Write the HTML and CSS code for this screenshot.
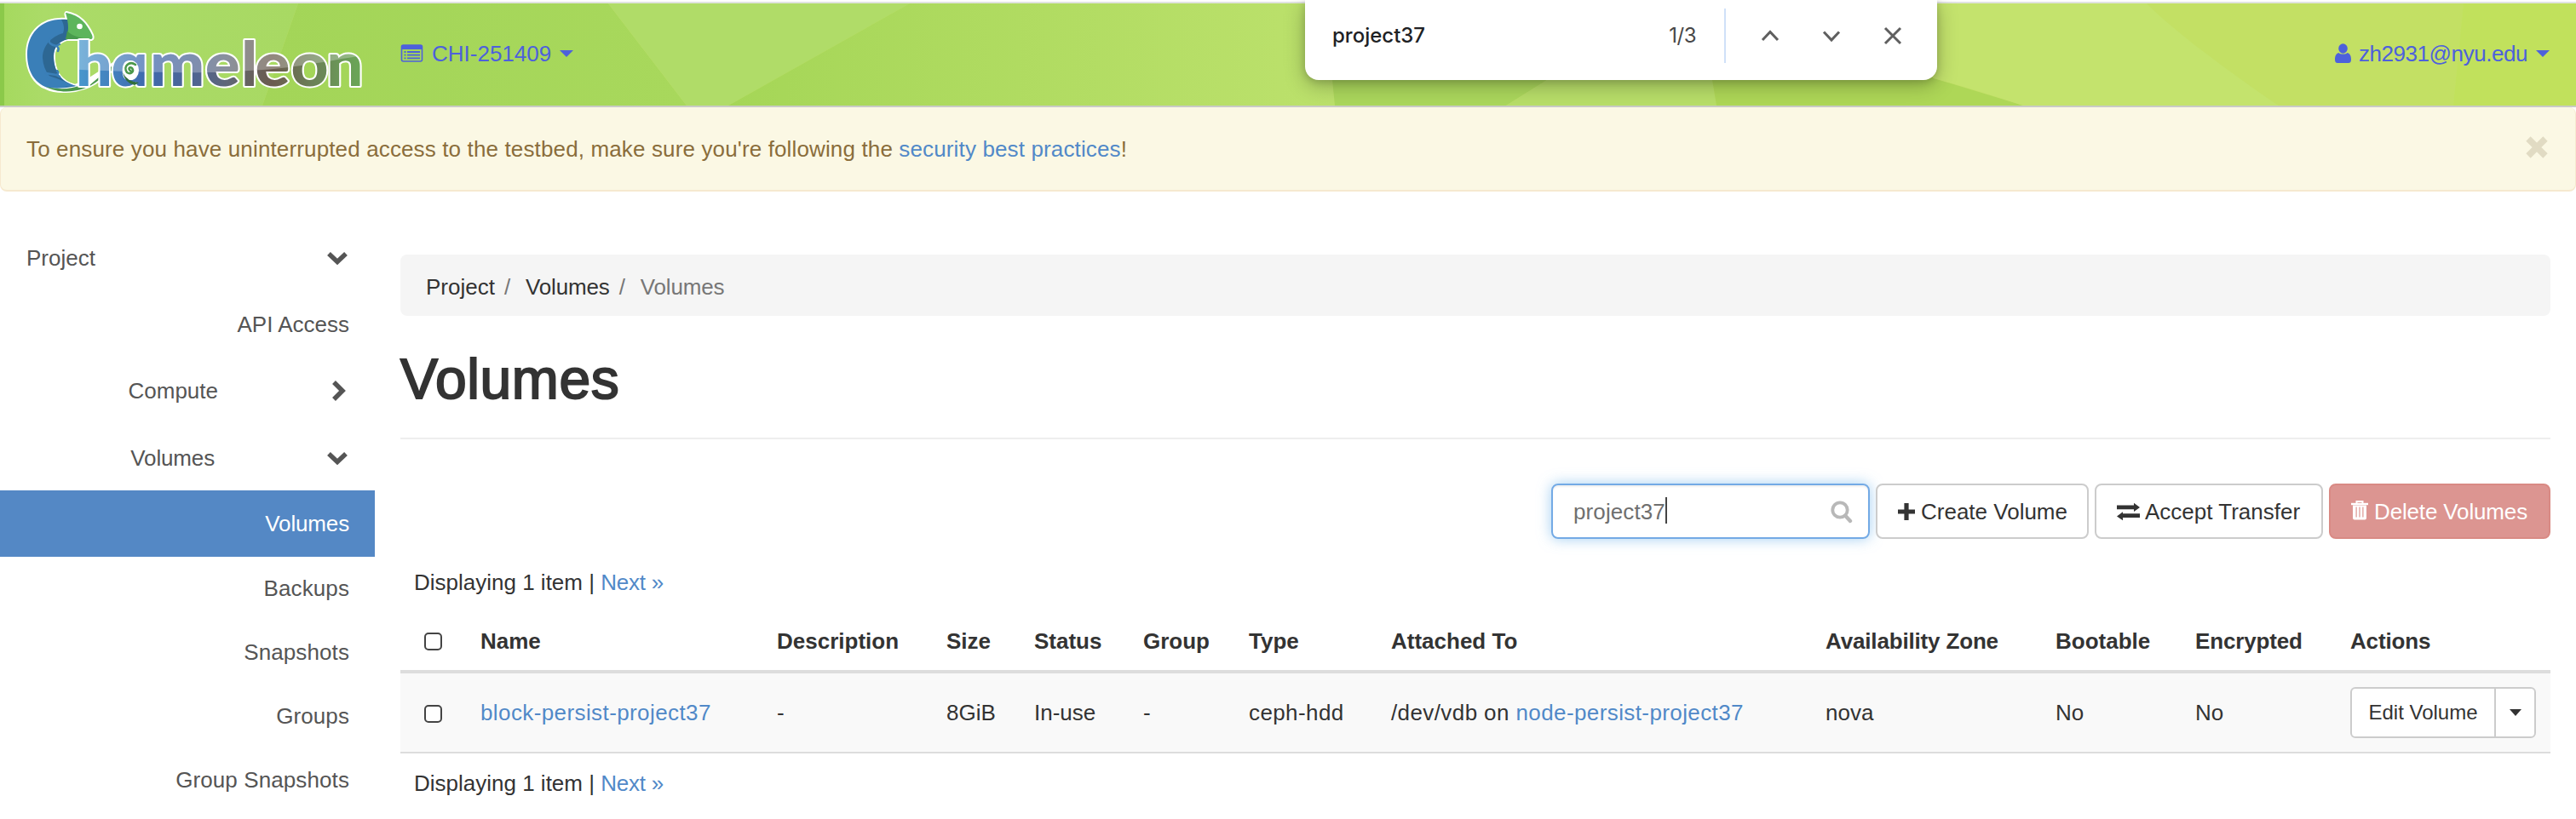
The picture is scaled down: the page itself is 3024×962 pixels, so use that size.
FILE: index.html
```html
<!DOCTYPE html>
<html lang="en">
<head>
<meta charset="utf-8">
<title>Volumes - Chameleon</title>
<link rel="stylesheet" href="styles.css">
</head>
<body>
<header class="navbar">
  <svg class="navbar-bg" viewBox="0 4 3024 120" preserveAspectRatio="none" aria-hidden="true">
    <defs>
      <linearGradient id="g1"><stop offset="0" stop-color="#a3d558"/><stop offset="1" stop-color="#a8d85c"/></linearGradient>
      <linearGradient id="g2"><stop offset="0" stop-color="#a5d657"/><stop offset="1" stop-color="#bce16c"/></linearGradient>
      <linearGradient id="g3"><stop offset="0" stop-color="#a5d95e"/><stop offset=".15" stop-color="#abdb68"/><stop offset="1" stop-color="#a8d963"/></linearGradient>
    </defs>
    <rect x="0" y="4" width="3024" height="120" fill="#c3e069"/>
    <path fill="url(#g3)" d="M0 4H350L308 124H0z"/>
    <path fill="url(#g1)" d="M350 4H714L806 124H308z"/>
    <path fill="#b0dc68" d="M714 4H1068L855 124H806z"/>
    <path fill="url(#g2)" d="M1068 4H1555L1567 124H855z"/>
    <path fill="#abd75c" d="M1555 4H1960L1768 124H1567z"/>
    <path fill="#b8de69" d="M1960 4H1995L2015 124H1768z"/>
    <path fill="#aed757" d="M1995 4H2180L2270 92Q2310 104 2375 124H2015z"/>
    <path fill="#c4e36d" d="M2180 4H2520C2545 30 2610 80 2675 124H2375Q2310 102 2270 92z"/>
    <path fill="#c3e064" d="M2520 4H2892L2880 124H2675C2610 80 2545 30 2520 4z"/>
    <path fill="#c1e15c" d="M2892 4H3024V124H2880z"/>
    <rect x="0" y="4" width="5" height="120" fill="#8bc94a"/>
  </svg>
  <a class="brand" href="#">
    <svg class="logo" viewBox="28 10 402 104" role="img">
      <defs>
        <linearGradient id="hue" gradientUnits="userSpaceOnUse" x1="88" y1="0" x2="402" y2="0">
          <stop offset="0" stop-color="#4796cc"/><stop offset=".24" stop-color="#3f68ad"/><stop offset=".42" stop-color="#50648f"/>
          <stop offset=".52" stop-color="#5f6778"/><stop offset=".6" stop-color="#66625f"/><stop offset=".68" stop-color="#6b5b4f"/>
          <stop offset=".82" stop-color="#6b8057"/><stop offset="1" stop-color="#6aa857"/>
        </linearGradient>
        <pattern id="letters" patternUnits="userSpaceOnUse" x="0" y="0" width="440" height="120">
          <rect width="440" height="120" fill="url(#hue)"/>
          <path fill="#fff" fill-opacity=".27" d="M0 0H440V60C380 66 340 80 275 83C225 87 150 86 0 77z"/>
        </pattern>
      </defs>
      <path fill="#fff" stroke="#fff" stroke-width="4" stroke-linejoin="round" d="M79 23C50 20 32 38 32 64C32 84 41 98 54 103C68 110 94 108 112 97L140 76L138 72L104 94L88 101C70 96 63 82 63 66C63 56 68 49 78 46H106C109 46 109 44 108 41C102 28 94 18 78 15C76 17 79 20 79 23z"/>
      <path class="hollow" d="M80 50C70 51 65 58 65 66C65 82 73 95 88 98L91 97V50z"/>
      <path fill="#3a7fb8" d="M79 23C50 20 32 38 32 64C32 84 41 98 56 103Q72 105 90 101C70 96 63 82 63 66C63 56 68 49 78 46z"/>
      <path fill="#2d6793" d="M72 23H80V46C68 49 63 56 63 66C63 82 70 96 88 101L78 102C60 96 51 84 50 68C50 54 60 43 74 39C76 34 75 28 72 23z"/>
      <path fill="#3a7fb8" d="M54 88Q68 92 88 101L72 102Q58 98 54 88z"/>
      <path fill="none" stroke="#3a7fb8" stroke-width="2.5" stroke-linecap="round" d="M58 46Q56 52 66 54Q70 56 68 60M66 54L70 52M54 86L66 88Q70 86 67 83M66 88L70 90"/>
      <path fill="#5db55c" d="M78 15C94 18 102 28 108 41C109 44 109 46 106 46H77C81 38 81 28 77 15z"/>
      <path fill="#479a4c" d="M79 36Q85 44 106 46H77z"/>
      <circle cx="93.500" cy="31" r="3.300" fill="#fff"/>
      <path fill="#4b984b" d="M54 102C72 106 84 104 92 101H104L138 72V78L112 97C94 110 68 110 54 102z"/>
      <text class="logo-text" transform="scale(1.06 1)" x="83.800 123.100 166 227.100 267 282.500 322.200 361.600" y="101">hɑmeleon</text>
      <ellipse cx="153.500" cy="82.500" rx="9.500" ry="11.500" fill="#fff"/>
      <path fill="none" stroke="#4b984b" stroke-width="2.600" stroke-linecap="round" d="M153 83C150 81 152 78 155 80C158 84 153 88 149 85C144 78 152 71 159 76"/>
      <path fill="#2f6e3c" d="M144 85Q149 96 163 97L158 100Q147 98 144 85z"/>
    </svg>
  </a>
  <a class="nav-link project" href="#">
    <svg class="icon-list" viewBox="0 0 26 21" fill="none" stroke="#4d61dc"><rect x="1" y="1" width="24" height="19" rx="2" stroke-width="1.6"/><path stroke="none" fill="#4d61dc" d="M1 1h24v5H1z"/><path stroke-width="1.8" d="M4 9h2M7.500 9h15M4 12.700h2M7.500 12.700h15M4 16.400h2M7.500 16.400h15"/></svg>
    <span>CHI-251409</span>
    <i class="caret"></i>
  </a>
  <a class="nav-link user" href="#">
    <svg class="icon-user" viewBox="0 0 19 23" fill="#4d61dc"><ellipse cx="9.500" cy="6" rx="5.300" ry="5.800"/><path d="M4.500 11C6 13 13 13 14.500 11C18 12 19 15 19 19C19 22 17.500 23 16 23H3C1.500 23 0 22 0 19C0 15 1 12 4.500 11z"/></svg>
    <span class="user-name">zh2931@nyu.edu</span>
    <i class="caret"></i>
  </a>
</header>

<div class="alert">
  <p>To ensure you have uninterrupted access to the testbed, make sure you're following the <a href="#">security best practices</a>!</p>
  <svg class="icon-close" viewBox="0 0 26 26" stroke="#e1dbc3" stroke-width="7.500"><path d="M3 3l20 20M23 3L3 23"/></svg>
</div>

<div class="layout">
  <nav class="sidebar">
    <a class="item top" href="#"><span>Project</span><svg class="chev" viewBox="0 0 26 26"><path d="M3 8l10 9.500L23 8"/></svg></a>
    <a class="item" href="#"><span class="api">API Access</span></a>
    <a class="item compute" href="#"><span>Compute</span><svg class="chev" viewBox="0 0 26 26"><path d="M9 3l10 10-10 10"/></svg></a>
    <a class="item volumes" href="#"><span class="vol">Volumes</span><svg class="chev" viewBox="0 0 26 26"><path d="M3 8l10 9.500L23 8"/></svg></a>
    <a class="item active" href="#"><span class="vol">Volumes</span></a>
    <a class="item sub" href="#">Backups</a>
    <a class="item sub" href="#">Snapshots</a>
    <a class="item sub" href="#">Groups</a>
    <a class="item sub" href="#">Group Snapshots</a>
  </nav>

  <main class="content">
    <ol class="breadcrumb">
      <li>Project</li><li class="vol">Volumes</li><li class="vol current">Volumes</li>
    </ol>
    <h1>Volumes</h1>

    <div class="toolbar">
      <div class="search"><span>project37</span><i class="cursor"></i>
        <svg class="icon-search" viewBox="0 0 26 28" fill="none" stroke="#b8b8b8"><circle cx="11" cy="12" r="8.700" stroke-width="3.800"/><path stroke-width="4.400" stroke-linecap="round" d="M17.500 19l5.500 6"/></svg>
      </div>
      <button class="btn create"><svg viewBox="0 0 20 24"><path stroke="#333" stroke-width="5.200" d="M10 2v20M0 12h20"/></svg>Create Volume</button>
      <button class="btn accept"><svg viewBox="0 0 27 24" fill="#333"><path d="M0 4.500h20V1.800L27 7l-7 5V9.300H0zM27 14.200H7v-2L0 17.500l7 4.800v-3.200h20z"/></svg>Accept Transfer</button>
      <button class="btn delete"><svg viewBox="0 0 20 24" fill="none" stroke="#fff"><path stroke-width="2" d="M6.500 4V1.500h7V4"/><path stroke-width="2.400" d="M0 4.500h20"/><path stroke="none" fill="#fff" fill-rule="evenodd" d="M2 6h16v15q0 2-2 2H4q-2 0-2-2zM5.500 8v12h1.200V8zM9.400 8v12h1.200V8zM13.300 8v12h1.200V8z"/></svg>Delete Volumes</button>
    </div>

    <p class="count">Displaying 1 item | <a href="#">Next »</a></p>
    <table class="volumes-table">
      <colgroup><col class="c0"><col class="c1"><col class="c2"><col class="c3"><col class="c4"><col class="c5"><col class="c6"><col class="c7"><col class="c8"><col class="c9"><col class="c10"><col class="c11"></colgroup>
      <thead><tr><th><input type="checkbox"></th><th>Name</th><th>Description</th><th>Size</th><th>Status</th><th>Group</th><th>Type</th><th>Attached To</th><th class="tight">Availability Zone</th><th>Bootable</th><th class="tight">Encrypted</th><th class="tight">Actions</th></tr></thead>
      <tbody><tr><td><input type="checkbox"></td><td><a class="wide" href="#">block-persist-project37</a></td><td>-</td><td>8GiB</td><td>In-use</td><td>-</td><td class="wide">ceph-hdd</td><td class="wide">/dev/vdb on <a href="#">node-persist-project37</a></td><td>nova</td><td>No</td><td>No</td>
        <td><div class="btn-group"><button class="edit">Edit Volume</button><button class="more"><i class="caret"></i></button></div></td></tr></tbody>
    </table>
    <p class="count bottom">Displaying 1 item | <a href="#">Next »</a></p>
  </main>
</div>

<div class="find-bar">
  <span class="find-text">project37</span>
  <span class="find-count">1/3</span>
  <i class="find-divider"></i>
  <svg viewBox="0 0 24 24"><path d="M3 17l9-9.500 9 9.500"/></svg>
  <svg viewBox="0 0 24 24"><path d="M3 7.500l9 9.500 9-9.500"/></svg>
  <svg viewBox="0 0 24 24"><path d="M3 3l18 18M21 3L3 21"/></svg>
</div>
</body>
</html>
```
FILE: styles.css
```css
* { box-sizing: border-box; }
body {
  margin: 0;
  padding-top: 2px;
  height: 962px;
  overflow: hidden;
  position: relative;
  background: #fff;
  color: #333;
  font: 26px/38px "Liberation Sans", Arial, sans-serif;
}
a { color: #5189c8; text-decoration: none; }
p, h1, ol { margin: 0; padding: 0; }
button { font: inherit; color: #333; background: #fff; margin: 0; }
svg { display: block; flex: none; }
.vol { letter-spacing: -0.15px; }

/* Navbar */
.navbar {
  position: relative;
  display: flex;
  align-items: center;
  height: 124px;
  border-top: 2px solid #e1e3e0;
  border-bottom: 2px solid #c9cbc6;
  padding: 0 31px 0 28px;
}
.navbar-bg { position: absolute; inset: 0; width: 100%; height: 100%; }
.brand { position: relative; margin-right: 40px; margin-top: -4px; }
.logo { width: 402px; height: 104px; overflow: visible; }
.logo-text {
  font: 900 72px Lato, sans-serif;
  fill: url(#letters);
  stroke: #fff;
  stroke-width: 4px;
  stroke-linejoin: round;
  paint-order: stroke;
}
.hollow { fill: #abdb66; }
.nav-link { position: relative; display: flex; align-items: center; color: #4d61dc; }
.icon-list { width: 27px; height: 21px; margin-right: 10px; margin-top: -4px; }
.icon-user { width: 19px; height: 23px; margin-right: 9px; margin-top: -3px; }
.user { margin-left: auto; }
.user-name { letter-spacing: -0.44px; }
.nav-link span { line-height: 38px; padding-top: 1px; margin-top: -4px; }
.caret {
  display: block;
  border: 8px solid transparent;
  border-top-color: currentColor;
  border-bottom: 0;
}
.nav-link .caret { margin-left: 10px; margin-top: -2px; }

/* Alert */
.alert {
  display: flex;
  justify-content: space-between;
  align-items: flex-start;
  height: 99px;
  padding: 30px 32px 0 30px;
  border: 1px solid #f6e9cf;
  border-width: 0 1px 2px;
  border-radius: 8px;
  background: #fbf8e4;
  color: #8a6d3b;
  letter-spacing: 0.138px;
}
.icon-close { width: 26px; height: 26px; margin-top: 4px; }

/* Sidebar */
.layout { display: grid; grid-template-columns: 440px 1fr; gap: 30px; padding-right: 30px; }
.sidebar { padding-top: 39px; }
.item {
  display: flex;
  justify-content: flex-end;
  align-items: center;
  height: 78px;
  line-height: 78px;
  padding: 0 30px 0 31px;
  color: #555;
}
.top { justify-content: space-between; }
.compute { margin-bottom: 1px; }
.compute span { margin-right: 128px; }
.volumes { margin-bottom: -1px; }
.volumes span { margin-right: 132px; }
.active { background: #5488c5; color: #fff; }
.sub { height: 75px; line-height: 75px; letter-spacing: 0.1px; }
.chev { width: 26px; height: 26px; margin-right: 1px; margin-left: -1px; fill: none; stroke: #555; stroke-width: 5.5px; }

/* Content */
.content { padding-top: 74px; }
.breadcrumb {
  display: flex;
  height: 72px;
  padding: 2px 0 0 30px;
  line-height: 72px;
  border-radius: 8px;
  background: #f5f5f5;
  list-style: none;
}
.breadcrumb li + li::before { content: "/"; color: #777; padding: 0 18px 0 11px; }
.current { color: #777; }
h1 {
  margin-top: 38px;
  padding-bottom: 33px;
  border-bottom: 2px solid #eee;
  font-size: 66px;
  line-height: 72px;
  font-weight: 400;
  letter-spacing: 0.6px;
  -webkit-text-stroke: 2px #333;
}
.toolbar { display: flex; justify-content: flex-end; gap: 7px; margin-top: 52px; }
.search {
  display: flex;
  align-items: center;
  width: 374px;
  height: 65px;
  padding: 0 18px 0 24px;
  border: 2px solid #73aae5;
  border-radius: 8px;
  box-shadow: inset 0 2px 2px rgba(0, 0, 0, .06), 0 0 16px rgba(102, 175, 233, .6);
  color: #6f6f6f;
  letter-spacing: 0.1px;
}
.cursor { width: 2px; height: 31px; background: #444; margin-top: -3px; }
.icon-search { width: 26px; height: 28px; margin-left: auto; }
.btn {
  display: flex;
  align-items: center;
  height: 65px;
  padding: 0 0 0 24px;
  border: 2px solid #ccc;
  border-radius: 8px;
  white-space: nowrap;
}
.btn svg { height: 24px; margin-right: 7px; }
.create { width: 250px; }
.create svg { width: 20px; }
.accept { width: 268px; }
.accept svg { width: 27px; margin-right: 6px; }
.delete { width: 260px; background: #dc9591; border-color: #d98a84; color: #fff; letter-spacing: -0.15px; }
.delete svg { width: 20px; height: 27px; margin-top: -2px; }

.count { padding: 32px 0 0 16px; }
.count a { letter-spacing: -0.2px; }
.bottom { padding-top: 16px; }
.volumes-table { width: 2524px; table-layout: fixed; border-spacing: 0; }
.c0 { width: 94px; } .c1 { width: 348px; } .c2 { width: 199px; } .c3 { width: 103px; }
.c4 { width: 128px; } .c5 { width: 124px; } .c6 { width: 167px; } .c7 { width: 510px; }
.c8 { width: 270px; } .c9 { width: 164px; } .c10 { width: 182px; } .c11 { width: 235px; }
th, td { padding: 0; text-align: left; white-space: nowrap; }
th { height: 88px; padding-top: 16px; vertical-align: middle; border-bottom: 4px solid #ddd; }
td { height: 94px; background: #f9f9f9; border-bottom: 2px solid #ddd; }
.wide { letter-spacing: 0.4px; }
.tight { letter-spacing: -0.16px; }
input[type="checkbox"] {
  appearance: none;
  display: block;
  width: 21px;
  height: 21px;
  margin: 0 0 0 28px;
  border: 2px solid #444;
  border-radius: 5px;
  background: #fff;
}
td input[type="checkbox"] { margin-top: 2px; }
.btn-group { display: flex; width: 218px; height: 60px; font-size: 24px; }
.edit, .more { border: 2px solid #ccc; padding: 0; }
.edit { width: 171px; border-radius: 6px 0 0 6px; }
.more { display: grid; place-items: center; width: 49px; margin-left: -2px; border-radius: 0 6px 6px 0; }
.more .caret { border-width: 8px 7px 0; }

/* Browser find bar */
.find-bar {
  position: absolute;
  left: 1532px;
  top: 0;
  width: 742px;
  height: 94px;
  display: flex;
  align-items: center;
  padding: 0 40px 10px 32px;
  border-radius: 0 0 16px 16px;
  background: #fff;
  box-shadow: 0 6px 24px rgba(0, 0, 0, .28), 0 2px 8px rgba(0, 0, 0, .15);
  font: 500 24px/32px Inter, sans-serif;
  color: #202124;
}
.find-count { margin-left: auto; font-weight: 400; color: #474747; letter-spacing: -0.5px; }
.find-divider { width: 2px; height: 64px; margin: 0 40px 0 33px; background: #d0e1f8; }
.find-bar svg { width: 24px; height: 24px; fill: none; stroke: #5f5f5f; stroke-width: 3px; }
.find-bar svg + svg { margin-left: 48px; }
```
